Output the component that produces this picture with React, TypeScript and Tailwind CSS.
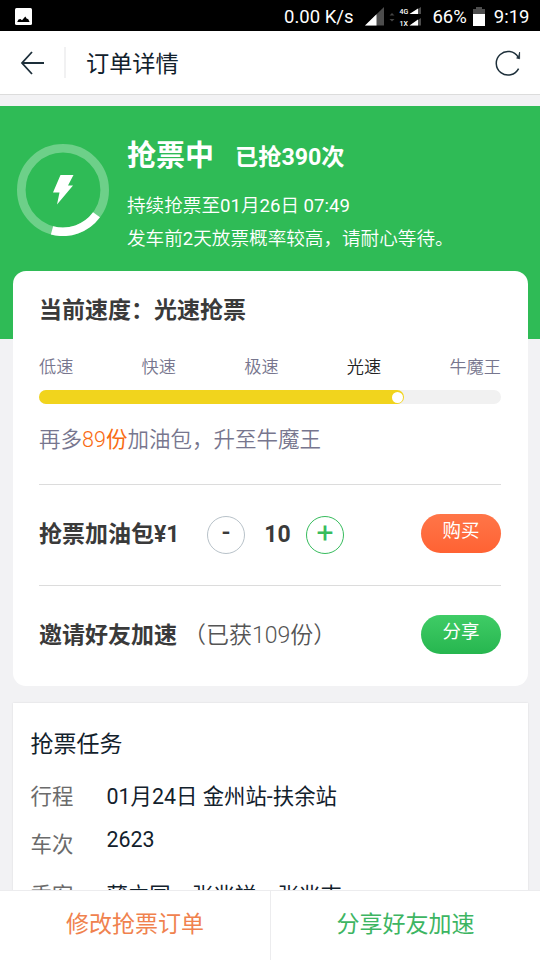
import React from "react";

const taskRows = [
  { label: "行程", value: "01月24日 金州站-扶余站", row: "h-[45px]", raise: "pb-[1px]" },
  { label: "车次", value: "2623", row: "h-[51px]", raise: "pb-[10px]" },
  { label: "乘客", value: "薄立国、张兆祥、张兆吉", row: "h-[51px]", raise: "" },
];

function StatusBar() {
  return (
    <div className="flex h-[31px] shrink-0 items-center bg-black pr-[10.5px] pl-[15px] text-[18.5px] text-white">
      <svg width="17" height="17" viewBox="0 0 17 17" className="mt-[1px]">
        <rect width="17" height="17" rx="1.5" fill="#fff" />
        <path d="M2.2 14 L3.5 11.6 L5.4 11 L7 12.2 L10.3 8.5 L12 11 L13 10.7 L14.6 14 Z" fill="#000" />
      </svg>
      <span className="ml-auto pt-[4px]">0.00 K/s</span>
      <svg width="56" height="19" viewBox="0 0 56 19" className="mt-[1px] ml-[12px]">
        <path d="M19 0 V18.5 H0 Z" fill="#4d4d4d" />
        <path d="M11.5 7.3 V18.5 H0 Z" fill="#fff" />
        <path d="M24.5 8.5 L27 6 L29.5 8.5 Z M24.5 12 L27 14.5 L29.5 12 Z" fill="#444" />
        <path d="M56 0 V7 H44.5 Z M56 11 V18.5 H44.5 Z" fill="#4d4d4d" />
        <path d="M53 1.5 V7 H44.5 Z M53 12.5 V18.5 H44.5 Z" fill="#fff" />
        <text x="34.5" y="7" fontSize="7" fontWeight="500" fill="#fff">4G</text>
        <text x="34.5" y="18.5" fontSize="7" fontWeight="500" fill="#fff">1X</text>
      </svg>
      <span className="ml-[11px] pt-[4px]">66%</span>
      <svg width="12" height="19" viewBox="0 0 12 19" className="mt-px ml-[6px]">
        <path d="M3 0 H9 V2 H12 V8 H0 V2 H3 Z" fill="#4d4d4d" />
        <rect y="7" width="12" height="12" fill="#fff" />
      </svg>
      <span className="ml-[9px] pt-[4px]">9:19</span>
    </div>
  );
}

function Header() {
  return (
    <header className="flex h-[64px] shrink-0 items-center border-b border-[#dcdcdc] bg-white pr-[18px] pl-[20px] text-[#12212c]">
      <svg width="25" height="24" viewBox="0 0 25 24" fill="none" stroke="#1d2f3a" strokeWidth="1.8">
        <path d="M12 1 L2 12 L12 23 M2 12 H24" />
      </svg>
      <div className="ml-[19px] h-[31px] w-[2px] bg-[#f1f1f2]" />
      <h1 className="ml-[20px] pt-[2px] text-[23.2px] leading-[32px]">订单详情</h1>
      <svg width="28" height="28" viewBox="0 0 28 28" className="ml-auto" fill="none" stroke="#1d2f3a" strokeWidth="1.5">
        <path d="M24.6 19.6 A11.8 11.8 0 1 1 24.2 8.2" />
        <path d="M25.6 3.2 V9.8 L22.6 9 L24.6 7.4 Z" fill="#1d2f3a" strokeWidth="0.8" />
      </svg>
    </header>
  );
}

function SpeedCard() {
  return (
    <section className="mr-[12.5px] ml-[13px] rounded-[13px] bg-white pr-[26.5px] pl-[26px] text-[#3a3a3a]">
      <h2 className="flex h-[77px] items-center pt-[4px] text-[23px] font-bold">当前速度：光速抢票</h2>
      <div className="flex h-[36px] items-center justify-between pt-[3px] text-[17.2px] font-[350] text-[#77768e]">
        <span>低速</span>
        <span>快速</span>
        <span>极速</span>
        <span className="text-[#222]">光速</span>
        <span>牛魔王</span>
      </div>
      <div className="mt-[6px] h-[14px] rounded-full bg-[#f1f1f1]">
        <div className="flex h-full w-[365px] items-center justify-end rounded-full bg-[#f1d41d] pr-[1px]">
          <div className="size-[11px] rounded-full bg-white" />
        </div>
      </div>
      <p className="flex h-[80px] items-center pb-[7px] text-[21.5px] font-[350] text-[#77768e]">
        再多<span className="text-[#f96b12]">89<span className="font-normal">份</span></span>加油包，升至牛魔王
      </p>
      <div className="flex h-[101px] items-center border-t border-[#dcdcdc]">
        <span className="w-[168px] text-[23px] font-bold">抢票加油包¥1</span>
        <button className="flex size-[38px] items-center justify-center rounded-full border border-[#b8c2c9] pb-[4px] text-[25px] font-medium">-</button>
        <span className="w-[61px] pl-[4px] text-center text-[23px] font-bold">10</span>
        <button className="flex size-[38px] items-center justify-center rounded-full border border-[#37bc5d] pb-[5px] text-[30px] text-[#37bc5d]">+</button>
        <button className="mb-[4px] ml-auto h-[39px] w-[80px] rounded-[20px] bg-linear-to-b from-[#ff7548] to-[#ff6233] pb-[3px] text-[18.5px] text-white">购买</button>
      </div>
      <div className="flex h-[101px] items-center border-t border-[#dcdcdc]">
        <span className="text-[23px] font-bold">邀请好友加速</span>
        <span className="ml-[6px] text-[23px] font-[350] text-[#555]">（已获109份）</span>
        <button className="mb-[4px] ml-auto h-[39px] w-[80px] rounded-[20px] bg-linear-to-b from-[#3fcc66] to-[#26b64f] pb-[3px] text-[18.5px] text-white">分享</button>
      </div>
    </section>
  );
}

export default function App() {
  return (
    <div className="flex h-[960px] w-[540px] flex-col overflow-hidden bg-[#f2f2f4] font-[Roboto,'Noto_Sans_CJK_SC',sans-serif]">
      <StatusBar />
      <Header />
      <main className="min-h-0 flex-1 overflow-hidden pt-[11px]">
        <div className="h-[233px] bg-[#2fbb56] text-white">
          <div className="flex pl-[17px]">
            <svg width="92" height="92" viewBox="0 0 92 92" className="mt-[38px]" fill="none">
              <circle cx="46" cy="46" r="41.7" stroke="#6dd089" strokeWidth="8.6" />
              <path d="M79.5 70.8 A41.7 41.7 0 0 1 35 86.3" stroke="#fff" strokeWidth="8.6" />
              <path d="M43.5 31 H56.5 L51 41.5 H56 L40 60.5 L42.5 48.5 H36 Z" fill="#fff" />
            </svg>
            <div className="ml-[18px] pt-[25px]">
              <div className="flex h-[48px] items-center font-bold">
                <span className="pt-[3px] text-[29px]">抢票中</span>
                <span className="ml-[21px] pt-[5px] text-[23.2px]">已抢390次</span>
              </div>
              <p className="mt-[11px] text-[18.6px] leading-[33px] font-[350]">
                持续抢票至<span className="font-normal">01</span>月<span className="font-normal">26</span>日 <span className="font-normal">07:49</span>
                <br />
                发车前<span className="font-normal">2</span>天放票概率较高，请耐心等待。
              </p>
            </div>
          </div>
        </div>
        <div className="-mt-[68px]">
          <SpeedCard />
        </div>
        <section className="mr-[12.5px] ml-[13px] mt-[17px] bg-white pr-[18px] pl-[17.5px] text-[#12212c] shadow-[0_0_2px_rgba(0,0,0,0.1)]">
          <h2 className="flex h-[71px] items-center pt-[13px] text-[23px]">抢票任务</h2>
          {taskRows.map((r) => (
            <div key={r.label} className={`flex items-center pt-[2px] text-[21.4px] ${r.row}`}>
              <span className="w-[76px] text-[#6b6b6b]">{r.label}</span>
              <span className={r.raise}>{r.value}</span>
            </div>
          ))}
        </section>
      </main>
      <nav className="flex h-[70px] shrink-0 border-t border-[#ececee] bg-white text-[23px]">
        <button className="w-[271px] border-r border-[#ececee] text-[#f0824e]">修改抢票订单</button>
        <button className="flex-1 text-[#3db562]">分享好友加速</button>
      </nav>
    </div>
  );
}
